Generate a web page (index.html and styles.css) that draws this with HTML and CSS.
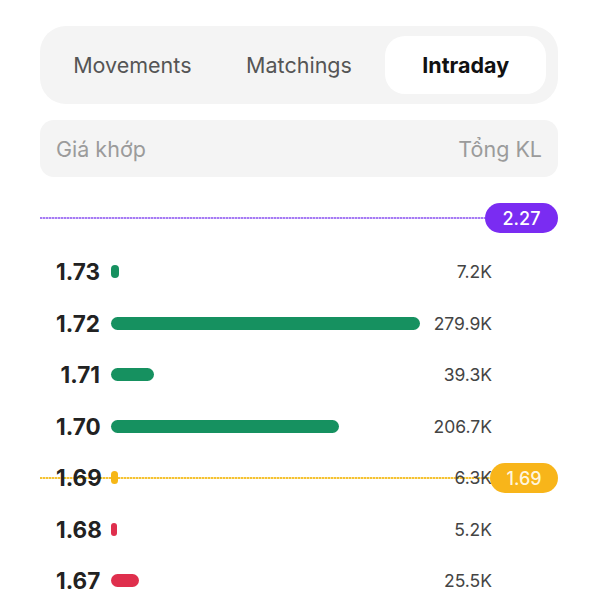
FILE: index.html
```html
<!DOCTYPE html>
<html>
<head>
<meta charset="utf-8">
<link rel="stylesheet" href="styles.css">
</head>
<body>
<div class="page">
  <div class="tabs">
    <div class="tab">Movements</div>
    <div class="tab">Matchings</div>
    <div class="tab active">Intraday</div>
  </div>
  <div class="head">
    <span>Giá khớp</span>
    <span>Tổng KL</span>
  </div>
  <div class="marker purple">
    <div class="mline"></div>
    <div class="badge">2.27</div>
  </div>
  <div class="rows">
    <div class="row"><span class="price">1.73</span><div class="track"><div class="bar green" style="width:8px"></div></div><span class="vol">7.2K</span></div>
    <div class="row"><span class="price">1.72</span><div class="track"><div class="bar green" style="width:309px"></div></div><span class="vol">279.9K</span></div>
    <div class="row"><span class="price">1.71</span><div class="track"><div class="bar green" style="width:43px"></div></div><span class="vol">39.3K</span></div>
    <div class="row"><span class="price">1.70</span><div class="track"><div class="bar green" style="width:228px"></div></div><span class="vol">206.7K</span></div>
    <div class="row ref">
      <div class="marker yellow overlay">
        <div class="mline"></div>
        <div class="badge">1.69</div>
      </div>
      <span class="price">1.69</span><div class="track"><div class="bar yellowbar" style="width:7px"></div></div><span class="vol">6.3K</span>
    </div>
    <div class="row"><span class="price">1.68</span><div class="track"><div class="bar red" style="width:6px"></div></div><span class="vol">5.2K</span></div>
    <div class="row"><span class="price">1.67</span><div class="track"><div class="bar red" style="width:28px"></div></div><span class="vol">25.5K</span></div>
  </div>
</div>
</body>
</html>
```
FILE: styles.css
```css
* { box-sizing: border-box; }
html, body { margin: 0; padding: 0; background: #fff; }
body { font-family: Inter, "Noto Sans", sans-serif; color: #222; }
.page { padding: 26px 42px 0 40px; width: 600px; height: 600px; overflow: hidden; }

.tabs {
  display: grid;
  grid-template-columns: repeat(3, 1fr);
  gap: 6px;
  height: 78px;
  padding: 10px 12px;
  background: #f4f4f4;
  border-radius: 26px;
}
.tab {
  display: flex;
  align-items: center;
  justify-content: center;
  font-size: 21.5px;
  color: #555;
  border-radius: 20px;
}
.tab.active {
  background: #fff;
  color: #111;
  font-weight: 700;
}

.head {
  margin-top: 16px;
  height: 57px;
  background: #f4f4f4;
  border-radius: 14px;
  padding: 0 16px;
  display: flex;
  justify-content: space-between;
  align-items: center;
  font-size: 21.5px;
  color: #9b9b9b;
}

.marker {
  display: flex;
  align-items: center;
  height: 30px;
}
.marker.purple { margin-top: 26px; }
.mline { flex: 1; height: 2px; }
.purple .mline { background: repeating-linear-gradient(90deg, #a67af4 0 2px, #d6c3fa 2px 3px); }
.yellow .mline { background: repeating-linear-gradient(90deg, #f5c232 0 2px, #fbe4a0 2px 3px); }
.badge {
  height: 30px;
  border-radius: 15px;
  color: #fff;
  font-size: 18px;
  font-weight: 500;
  display: flex;
  align-items: center;
  justify-content: center;
}
.purple .badge { width: 73px; background: #7a2cf2; }
.yellow .badge { width: 68px; background: #f8b51a; color: #fff6df; position: relative; z-index: 3; }

.rows { margin-top: 13px; }
.row {
  height: 51.5px;
  display: grid;
  grid-template-columns: 44px 1fr auto;
  column-gap: 11px;
  align-items: center;
  padding: 0 66px 0 16px;
}
.row.ref { position: relative; }
.overlay {
  position: absolute;
  left: 0;
  right: 0;
  top: 11px;
}
.price {
  text-align: right;
  font-size: 22.5px;
  font-weight: 700;
  color: #222;
  white-space: nowrap;
  position: relative;
  z-index: 1;
}
.track { display: flex; align-items: center; position: relative; z-index: 1; }
.bar { height: 13px; border-radius: 7px; }
.green { background: #169160; }
.yellowbar { background: #f6b716; }
.red { background: #df2f4d; }
.vol {
  font-size: 17.5px;
  color: #444;
  text-align: right;
  position: relative;
  z-index: 1;
}
```
